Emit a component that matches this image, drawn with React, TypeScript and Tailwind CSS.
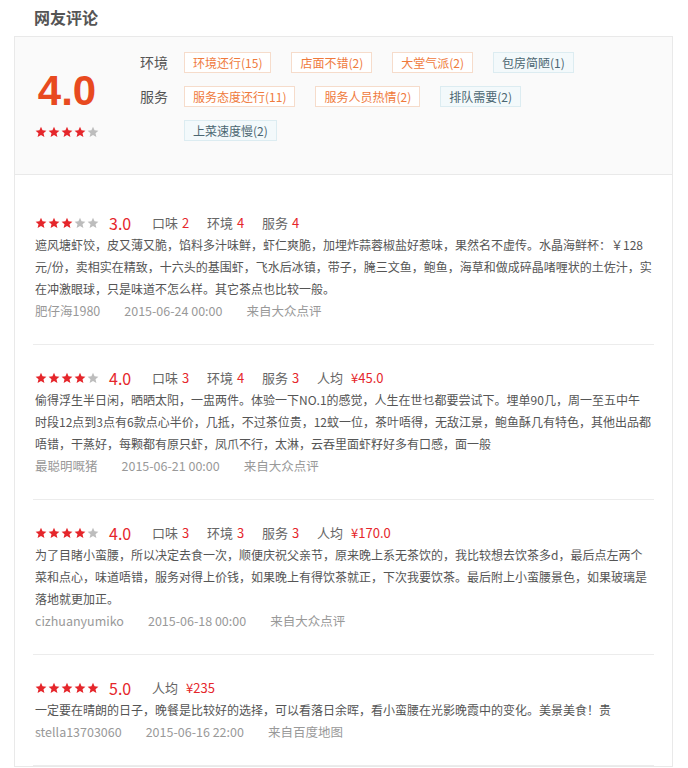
const FONT = {
  fontFamily: '"Noto Sans CJK SC", "Liberation Sans", sans-serif',
};

interface ITag {
  text: string;
  good?: boolean;
}

interface IReview {
  stars: number;
  scores?: { label: string; value: number }[];
  price?: string;
  lines: string[];
  user: string;
  date: string;
  source: string;
}

const ENV_TAGS: ITag[] = [
  { text: '环境还行(15)', good: true },
  { text: '店面不错(2)', good: true },
  { text: '大堂气派(2)', good: true },
  { text: '包房简陋(1)' },
];

const SERVICE_TAGS: ITag[] = [
  { text: '服务态度还行(11)', good: true },
  { text: '服务人员热情(2)', good: true },
  { text: '排队需要(2)' },
  { text: '上菜速度慢(2)' },
];

const REVIEWS: IReview[] = [
  {
    stars: 3,
    scores: [
      { label: '口味', value: 2 },
      { label: '环境', value: 4 },
      { label: '服务', value: 4 },
    ],
    lines: [
      '遮风塘虾饺，皮又薄又脆，馅料多汁味鲜，虾仁爽脆，加埋炸蒜蓉椒盐好惹味，果然名不虚传。水晶海鲜杯：￥128',
      '元/份，卖相实在精致，十六头的基围虾，飞水后冰镇，带子，腌三文鱼，鲍鱼，海草和做成碎晶啫喱状的土佐汁，实',
      '在冲激眼球，只是味道不怎么样。其它茶点也比较一般。',
    ],
    user: '肥仔海1980',
    date: '2015-06-24 00:00',
    source: '来自大众点评',
  },
  {
    stars: 4,
    scores: [
      { label: '口味', value: 3 },
      { label: '环境', value: 4 },
      { label: '服务', value: 3 },
    ],
    price: '¥45.0',
    lines: [
      '偷得浮生半日闲，晒晒太阳，一盅两件。体验一下NO.1的感觉，人生在世乜都要尝试下。埋单90几，周一至五中午',
      '时段12点到3点有6款点心半价，几抵，不过茶位贵，12蚊一位，茶叶唔得，无敌江景，鲍鱼酥几有特色，其他出品都',
      '唔错，干蒸好，每颗都有原只虾，凤爪不行，太淋，云吞里面虾籽好多有口感，面一般',
    ],
    user: '最聪明嘅猪',
    date: '2015-06-21 00:00',
    source: '来自大众点评',
  },
  {
    stars: 4,
    scores: [
      { label: '口味', value: 3 },
      { label: '环境', value: 3 },
      { label: '服务', value: 3 },
    ],
    price: '¥170.0',
    lines: [
      '为了目睹小蛮腰，所以决定去食一次，顺便庆祝父亲节，原来晚上系无茶饮的，我比较想去饮茶多d，最后点左两个',
      '菜和点心，味道唔错，服务对得上价钱，如果晚上有得饮茶就正，下次我要饮茶。最后附上小蛮腰景色，如果玻璃是',
      '落地就更加正。',
    ],
    user: 'cizhuanyumiko',
    date: '2015-06-18 00:00',
    source: '来自大众点评',
  },
  {
    stars: 5,
    price: '¥235',
    lines: [
      '一定要在晴朗的日子，晚餐是比较好的选择，可以看落日余晖，看小蛮腰在光影晚霞中的变化。美景美食！贵',
    ],
    user: 'stella13703060',
    date: '2015-06-16 22:00',
    source: '来自百度地图',
  },
];

const Stars = ({ count }: { count: number }) => (
  <div className="flex items-center gap-[1px]">
    {[0, 1, 2, 3, 4].map((i) => (
      <svg key={i} width="12" height="12" viewBox="0 0 24 24">
        <path
          d="M12 1.5l3.1 7.1 7.7.7-5.8 5.1 1.8 7.6L12 18l-6.8 4 1.8-7.6-5.8-5.1 7.7-.7z"
          fill={i < count ? '#e5262b' : '#bdbdbd'}
        />
      </svg>
    ))}
  </div>
);

const Tag = ({ tag }: ITag & { tag: ITag }) => (
  <span
    className={`flex h-[21px] items-center border px-2 text-[12px] ${
      tag.good
        ? 'border-[#f6dccb] bg-white text-[#ef7a3c]'
        : 'border-[#dcecf1] bg-[#f3f9fb] text-[#4b6671]'
    }`}
  >
    {tag.text}
  </span>
);

const TagRow = ({ label, tags }: { label: string; tags: ITag[] }) => (
  <div className="flex">
    <span className="w-[44px] shrink-0 text-[14px] leading-[21px] text-[#555]">
      {label}
    </span>
    <div className="flex w-[440px] flex-wrap gap-x-[20px] gap-y-[13px]">
      {tags.map((tag) => (
        <Tag key={tag.text} tag={tag} text={tag.text} />
      ))}
    </div>
  </div>
);

const ReviewItem = ({ review }: { review: IReview }) => (
  <div className="border-b border-[#ececec] py-[22px] pl-[2px]">
    <div className="flex h-[22px] items-center">
      <Stars count={review.stars} />
      <span className="ml-[10px] w-[43px] text-[16px] text-[#e5262b]">
        {review.stars}.0
      </span>
      {review.scores?.map((s) => (
        <span
          key={s.label}
          className="flex w-[55px] items-center gap-[4px] text-[13px]"
        >
          <span className="text-[#666]">{s.label}</span>
          <span className="text-[#e5262b]">{s.value}</span>
        </span>
      ))}
      {review.price && (
        <span className="flex items-center gap-[8px] text-[13px]">
          <span className="text-[#666]">人均</span>
          <span className="text-[#e5262b]">{review.price}</span>
        </span>
      )}
    </div>
    <div className="text-[12px] leading-[22px] text-[#555]">
      {review.lines.map((line) => (
        <div key={line} className="whitespace-nowrap">
          {line}
        </div>
      ))}
    </div>
    <div className="flex h-[22px] items-center gap-[24px] text-[12.5px] text-[#999]">
      <span>{review.user}</span>
      <span>{review.date}</span>
      <span>{review.source}</span>
    </div>
  </div>
);

const App = () => {
  return (
    <div className="min-h-[768px] w-[688px] bg-white" style={FONT}>
      <h2 className="pl-[34px] pt-[6px] text-[16px] font-bold leading-[22px] text-[#555]">
        网友评论
      </h2>

      <div className="ml-[14px] mr-[15px] mt-[8px] border border-[#e9e9e9]">
        <div className="flex h-[138px] border-b border-[#e9e9e9] bg-[#fafafa] pt-[15px]">
          <div className="flex w-[104px] flex-col items-center">
            <span
              className="mt-[18px] text-[42px] font-bold leading-[42px] text-[#e84a1f]"
              style={{ fontFamily: '"Liberation Sans", sans-serif' }}
            >
              4.0
            </span>
            <div className="mt-[14px]">
              <Stars count={4} />
            </div>
          </div>
          <div className="ml-[21px] flex flex-col gap-[13px]">
            <TagRow label="环境" tags={ENV_TAGS} />
            <TagRow label="服务" tags={SERVICE_TAGS} />
          </div>
        </div>

        <div className="px-[18px] pt-[15px]">
          {REVIEWS.map((review) => (
            <ReviewItem key={review.date} review={review} />
          ))}
        </div>
      </div>
    </div>
  );
};

export default App;
